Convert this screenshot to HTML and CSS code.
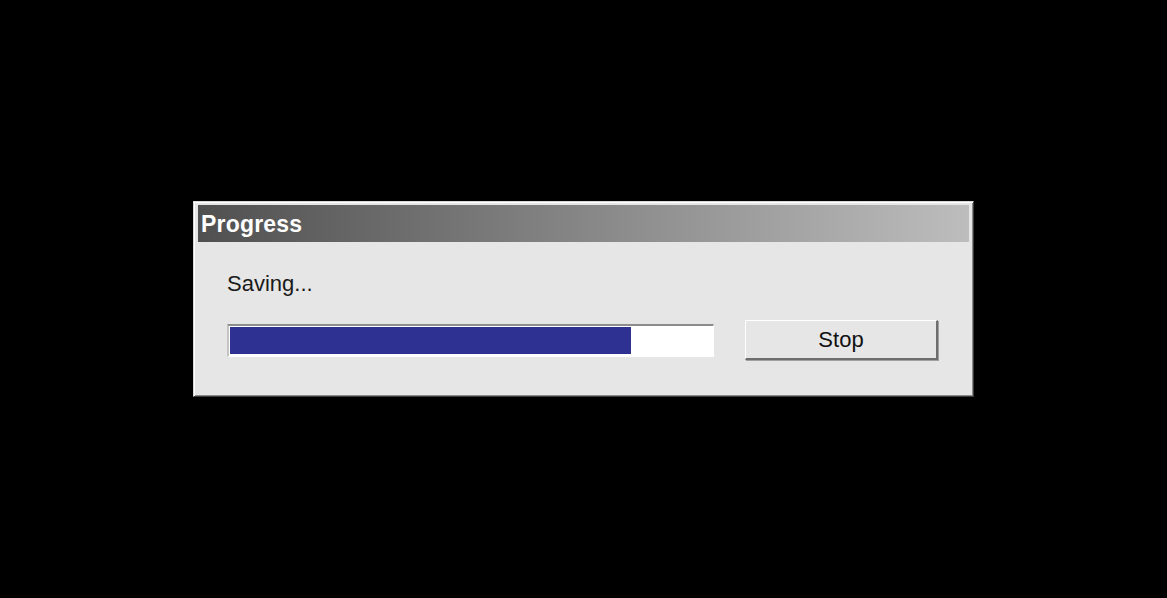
FILE: index.html
```html
<!DOCTYPE html>
<html lang="en">
<head>
    <meta charset="UTF-8">
    <meta name="viewport" content="width=device-width, initial-scale=1.0">
    <title>Progress</title>
    <link rel="stylesheet" href="styles.css">
</head>
<body>
    <main>
        <section id="dialog">
            <div id="titlebar">Progress</div>
            <section id="content">
                <p id="status">Saving...</p>
                <div id="row">
                    <div id="track">
                        <div id="fill" style="width: 83%"></div>
                    </div>
                    <button id="stop" type="button">Stop</button>
                </div>
            </section>
        </section>
    </main>
</body>
</html>
```

FILE: styles.css
```css
html, body{
    height: 100%;
}

body{
    margin: 0;
    padding: 0;
    background-color: #000;
}

main{
    width: 100%;
    height: 100%;
    display: flex;
    justify-content: center;
    align-items: center;
    font-family: "Liberation Sans", Arial, sans-serif;
}

#dialog{
    width: 781px;
    height: 196px;
    box-sizing: border-box;
    padding: 3px 4px 3px 4px;
    background-color: #e6e6e6;
    border: 1px solid;
    border-color: #d6d6d6 #3a3a3a #3a3a3a #d6d6d6;
    box-shadow: inset 1px 1px 0 #ffffff, inset -1px -1px 0 #8a8a8a;
    display: flex;
    flex-direction: column;
}

#titlebar{
    height: 37px;
    flex-shrink: 0;
    display: flex;
    align-items: center;
    padding-left: 3px;
    padding-top: 2px;
    box-sizing: border-box;
    background: linear-gradient(to right, #505050, #bdbdbd);
    color: #fff;
    font-weight: bold;
    font-size: 23px;
    letter-spacing: 0.2px;
}

#content{
    padding: 29px 29px 0 29px;
}

#status{
    margin: 0;
    height: 26px;
    line-height: 26px;
    font-size: 22px;
    color: #1a1a1a;
}

#row{
    margin-top: 23px;
    height: 40px;
    display: flex;
    align-items: center;
    gap: 31px;
}

#track{
    width: 487px;
    height: 33px;
    box-sizing: border-box;
    background-color: #fff;
    border-style: solid;
    border-width: 2px 1px 1px 2px;
    border-color: #8c8c8c #ffffff #ffffff #c4c4c4;
    padding: 1px 0 2px 1px;
}

#fill{
    height: 100%;
    background-color: #2e3192;
}

#stop{
    width: 193px;
    height: 40px;
    padding: 0;
    background-color: #e6e6e6;
    border-style: solid;
    border-width: 1px 2px 2px 1px;
    border-color: #ffffff #6e6e6e #6e6e6e #ffffff;
    box-shadow: 1px 1px 0 #a0a0a0;
    font-family: "Liberation Sans", Arial, sans-serif;
    font-size: 22px;
    color: #111;
}
```
